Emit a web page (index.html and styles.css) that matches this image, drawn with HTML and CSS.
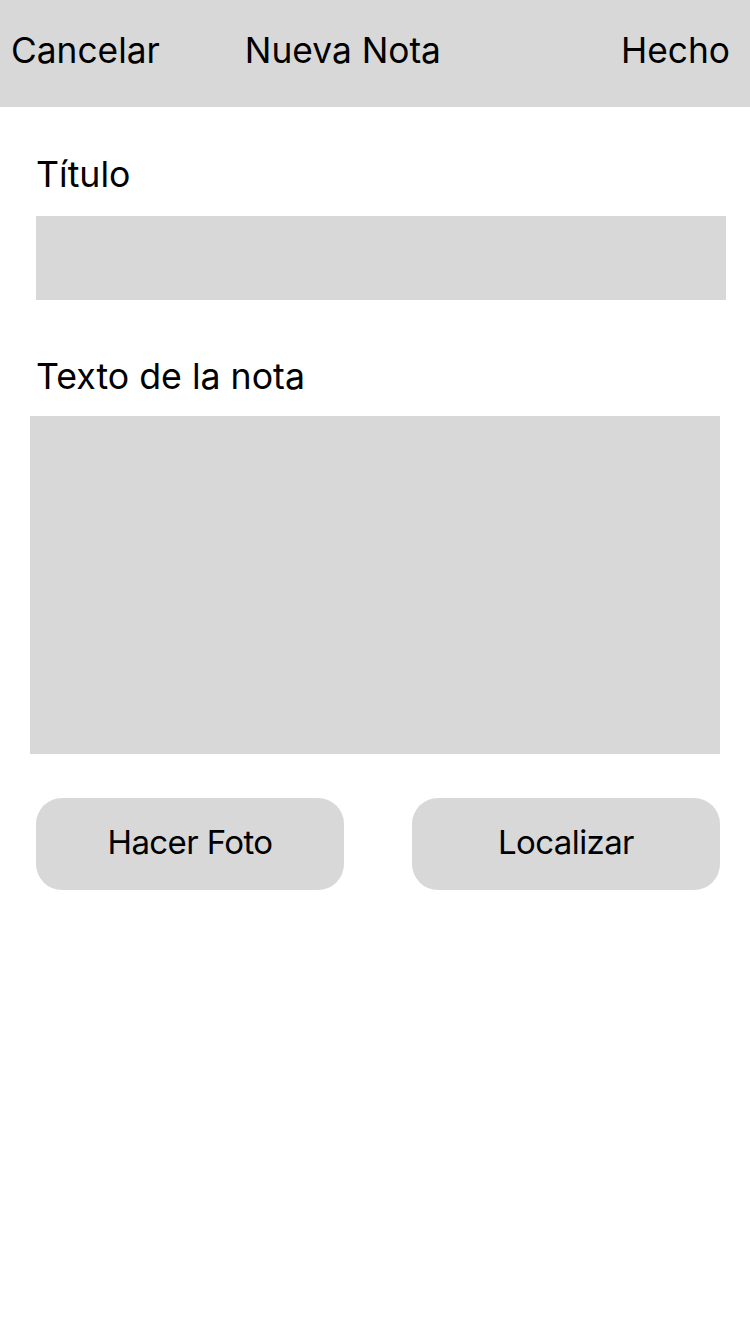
FILE: index.html
```html
<!DOCTYPE html>
<html lang="es">
<head>
<meta charset="utf-8">
<title>Nueva Nota</title>
<link rel="stylesheet" href="styles.css">
</head>
<body>
<header class="navbar">
  <span class="nav-btn nav-cancel">Cancelar</span>
  <span class="nav-title">Nueva Nota</span>
  <span class="nav-btn nav-done">Hecho</span>
</header>
<main class="form">
  <label class="field-label label-title">Título</label>
  <div class="input-title"></div>
  <label class="field-label label-body">Texto de la nota</label>
  <div class="input-body"></div>
  <div class="actions">
    <button class="action-btn">Hacer Foto</button>
    <button class="action-btn">Localizar</button>
  </div>
</main>
</body>
</html>
```

FILE: styles.css
```css
* { box-sizing: border-box; }
html, body {
  margin: 0;
  padding: 0;
  background: #ffffff;
  font-family: Inter, "Liberation Sans", Arial, sans-serif;
  color: #000;
}
.navbar {
  display: flex;
  align-items: center;
  height: 107px;
  background: #d8d8d8;
  padding: 0 20px 6px 11px;
  font-size: 35.3px;
  line-height: 40px;
}
.nav-title {
  margin-left: 85px;
}
.nav-done {
  margin-left: auto;
}
.form {
  display: flex;
  flex-direction: column;
  padding: 47px 24px 0 36px;
}
.field-label {
  display: block;
  font-size: 35.7px;
  line-height: 40px;
  height: 40px;
  padding-left: 0;
}
.label-title {
  margin-bottom: 22px;
}
.label-body {
  margin-top: 56px;
  margin-bottom: 20px;
}
.input-title {
  width: 690px;
  height: 84px;
  background: #d8d8d8;
}
.input-body {
  width: 690px;
  height: 338px;
  margin-left: -6px;
  background: #d8d8d8;
}
.actions {
  display: flex;
  gap: 68px;
  margin-top: 44px;
}
.action-btn {
  width: 308px;
  height: 92px;
  border: none;
  border-radius: 26px;
  background: #d8d8d8;
  font-family: inherit;
  font-size: 33px;
  color: #000;
  padding: 0 0 4px 0;
  letter-spacing: -0.6px;
}
```
